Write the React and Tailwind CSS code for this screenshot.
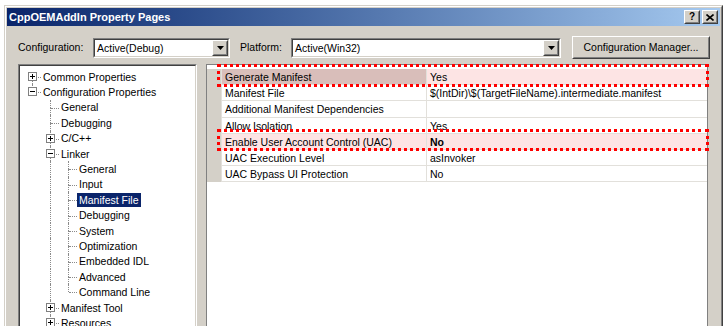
import React from 'react';

const treeItems = [
  { level: 0, label: 'Common Properties', box: '+', pos: 'first' },
  { level: 0, label: 'Configuration Properties', box: '-', pos: 'last' },
  { level: 1, label: 'General' },
  { level: 1, label: 'Debugging' },
  { level: 1, label: 'C/C++', box: '+' },
  { level: 1, label: 'Linker', box: '-' },
  { level: 2, label: 'General' },
  { level: 2, label: 'Input' },
  { level: 2, label: 'Manifest File', selected: true },
  { level: 2, label: 'Debugging' },
  { level: 2, label: 'System' },
  { level: 2, label: 'Optimization' },
  { level: 2, label: 'Embedded IDL' },
  { level: 2, label: 'Advanced' },
  { level: 2, label: 'Command Line', pos: 'last' },
  { level: 1, label: 'Manifest Tool', box: '+' },
  { level: 1, label: 'Resources', box: '+' },
];

const props = [
  { name: 'Generate Manifest', value: 'Yes', mark: 'selected' },
  { name: 'Manifest File', value: '$(IntDir)\\$(TargetFileName).intermediate.manifest' },
  { name: 'Additional Manifest Dependencies', value: '' },
  { name: 'Allow Isolation', value: 'Yes' },
  { name: 'Enable User Account Control (UAC)', value: 'No', mark: 'pink', bold: true },
  { name: 'UAC Execution Level', value: 'asInvoker' },
  { name: 'UAC Bypass UI Protection', value: 'No' },
];

function Raised({ className, children }) {
  return (
    <div className={`border border-t-white border-l-white border-r-[#404040] border-b-[#404040] bg-[#D4D0C8] ${className}`}>
      <div className="w-full h-full flex items-center justify-center border border-t-[#D4D0C8] border-l-[#D4D0C8] border-r-[#808080] border-b-[#808080]">
        {children}
      </div>
    </div>
  );
}

function Combo({ className, text }) {
  return (
    <div className={`h-[20px] flex border border-t-[#808080] border-l-[#808080] border-r-white border-b-white ${className}`}>
      <div className="flex-1 flex bg-white border border-t-[#404040] border-l-[#404040] border-r-[#D4D0C8] border-b-[#D4D0C8]">
        <span className="flex-1 pl-[2px] leading-[16px]">{text}</span>
        <Raised className="w-[16px] h-[16px]">
          <svg width="7" height="4" viewBox="0 0 7 4">
            <path d="M0 0h7L3.5 4z" fill="#000" />
          </svg>
        </Raised>
      </div>
    </div>
  );
}

function ExpandBox({ sign }) {
  return (
    <div className="absolute left-[5px] top-[3px] w-[9px] h-[9px] bg-white border border-[#808080] flex items-center justify-center">
      <svg width="5" height="5" viewBox="0 0 5 5">
        <path d="M0 2.5h5" stroke="#000" strokeWidth="1" />
        {sign === '+' ? <path d="M2.5 0v5" stroke="#000" strokeWidth="1" /> : null}
      </svg>
    </div>
  );
}

function TreeRow({ item }) {
  const cells = [];
  for (let l = 0; l < item.level; l++) {
    // only the Configuration Properties children keep a through line at level 1
    const through = l === 1;
    cells.push(
      <div key={l} className="relative w-[18px] h-full shrink-0">
        {through ? <div className="absolute left-[9px] top-0 bottom-0 border-l border-dotted border-[#8a8a8a]" /> : null}
      </div>
    );
  }
  const vTop = item.pos !== 'first';
  const vBottom = item.pos !== 'last';
  cells.push(
    <div key="c" className="relative w-[18px] h-full shrink-0">
      {vTop ? <div className="absolute left-[9px] top-0 h-[8px] border-l border-dotted border-[#8a8a8a]" /> : null}
      {vBottom ? <div className="absolute left-[9px] top-[8px] bottom-0 border-l border-dotted border-[#8a8a8a]" /> : null}
      <div className="absolute left-[10px] right-0 top-[8px] border-t border-dotted border-[#8a8a8a]" />
      {item.box ? <ExpandBox sign={item.box} /> : null}
    </div>
  );
  return (
    <div className="h-[15.4px] flex items-center">
      {cells}
      <span
        className={`px-[2px] h-[14px] leading-[14px] whitespace-nowrap ${
          item.selected ? 'bg-[#0A246A] text-white' : 'text-black'
        }`}
      >
        {item.label}
      </span>
    </div>
  );
}

function PropRow({ row }) {
  const nameBg = row.mark === 'selected' ? 'bg-[#D9BEBA]' : row.mark === 'pink' ? 'bg-[#FDE4E4]' : 'bg-white';
  const valBg = row.mark ? 'bg-[#FDE4E4]' : 'bg-white';
  return (
    <div className="h-[16.2px] flex border-b border-[#E2E0DB]">
      <div className={`w-[205px] shrink-0 border-l border-[#E2E0DB] pl-[3px] leading-[16px] whitespace-nowrap ${nameBg}`}>
        {row.name}
      </div>
      <div className={`flex-1 border-l border-[#E2E0DB] pl-[3px] leading-[16px] whitespace-nowrap ${valBg} ${row.bold ? 'font-bold' : ''}`}>
        {row.value}
      </div>
    </div>
  );
}

export default function App() {
  return (
    <div className="w-[726px] h-[326px] bg-white overflow-hidden font-['Liberation_Sans',Arial,sans-serif] text-[10.5px] text-black">
      <div className="ml-[4px] mt-[5px] w-[719px] h-[340px] border border-t-[#D4D0C8] border-l-[#D4D0C8] border-r-[#404040] border-b-[#404040]">
        <div className="w-full h-full p-[1px] bg-[#D4D0C8] border border-t-white border-l-white border-r-[#808080] border-b-[#808080] flex flex-col">
          {/* title bar */}
          <div className="h-[18px] shrink-0 flex items-center bg-linear-to-r from-[#0A246A] to-[#A6CAF0] pl-[2px] pr-[2px]">
            <span className="flex-1 text-white font-bold text-[11px]">CppOEMAddIn Property Pages</span>
            <Raised className="w-[16px] h-[14px]">
              <span className="font-bold text-[10px] leading-[10px]">?</span>
            </Raised>
            <Raised className="w-[16px] h-[14px] ml-[2px]">
              <svg width="8" height="7" viewBox="0 0 8 7">
                <path d="M0.5 0.5l7 6M7.5 0.5l-7 6" stroke="#000" strokeWidth="1.6" />
              </svg>
            </Raised>
          </div>

          {/* configuration row */}
          <div className="mt-[10px] h-[23px] flex items-center pl-[11px]">
            <span className="w-[75px] shrink-0">Configuration:</span>
            <Combo className="w-[137px]" text="Active(Debug)" />
            <span className="ml-[10px] w-[51px] shrink-0">Platform:</span>
            <Combo className="w-[270px]" text="Active(Win32)" />
            <Raised className="ml-[11px] w-[138px] h-[23px]">
              <span>Configuration Manager...</span>
            </Raised>
          </div>

          {/* panels */}
          <div className="mt-[5px] flex pl-[11px]">
            <div className="w-[179px] h-[280px] shrink-0 border border-t-[#808080] border-l-[#808080] border-r-white border-b-white">
              <div className="w-full h-full bg-white pt-[3px] pl-[3px] border border-t-[#404040] border-l-[#404040] border-r-[#D4D0C8] border-b-[#D4D0C8]">
                {treeItems.map((item, i) => (
                  <TreeRow key={i} item={item} />
                ))}
              </div>
            </div>

            <div className="relative ml-[9px] w-[502px] h-[280px] bg-white border border-[#808080]">
              <div className="pt-[4px] flex">
                <div className="w-[14px] shrink-0 bg-[#D4D0C8]" />
                <div className="flex-1">
                  {props.map((row) => (
                    <PropRow key={row.name} row={row} />
                  ))}
                </div>
              </div>
              <div className="absolute left-[10px] top-[-1px] w-[492px] h-[23px] border-[3px] border-dotted border-[#FF0000]" />
              <div className="absolute left-[10px] top-[64px] w-[492px] h-[22px] border-[3px] border-dotted border-[#FF0000]" />
            </div>
          </div>
        </div>
      </div>
    </div>
  );
}
